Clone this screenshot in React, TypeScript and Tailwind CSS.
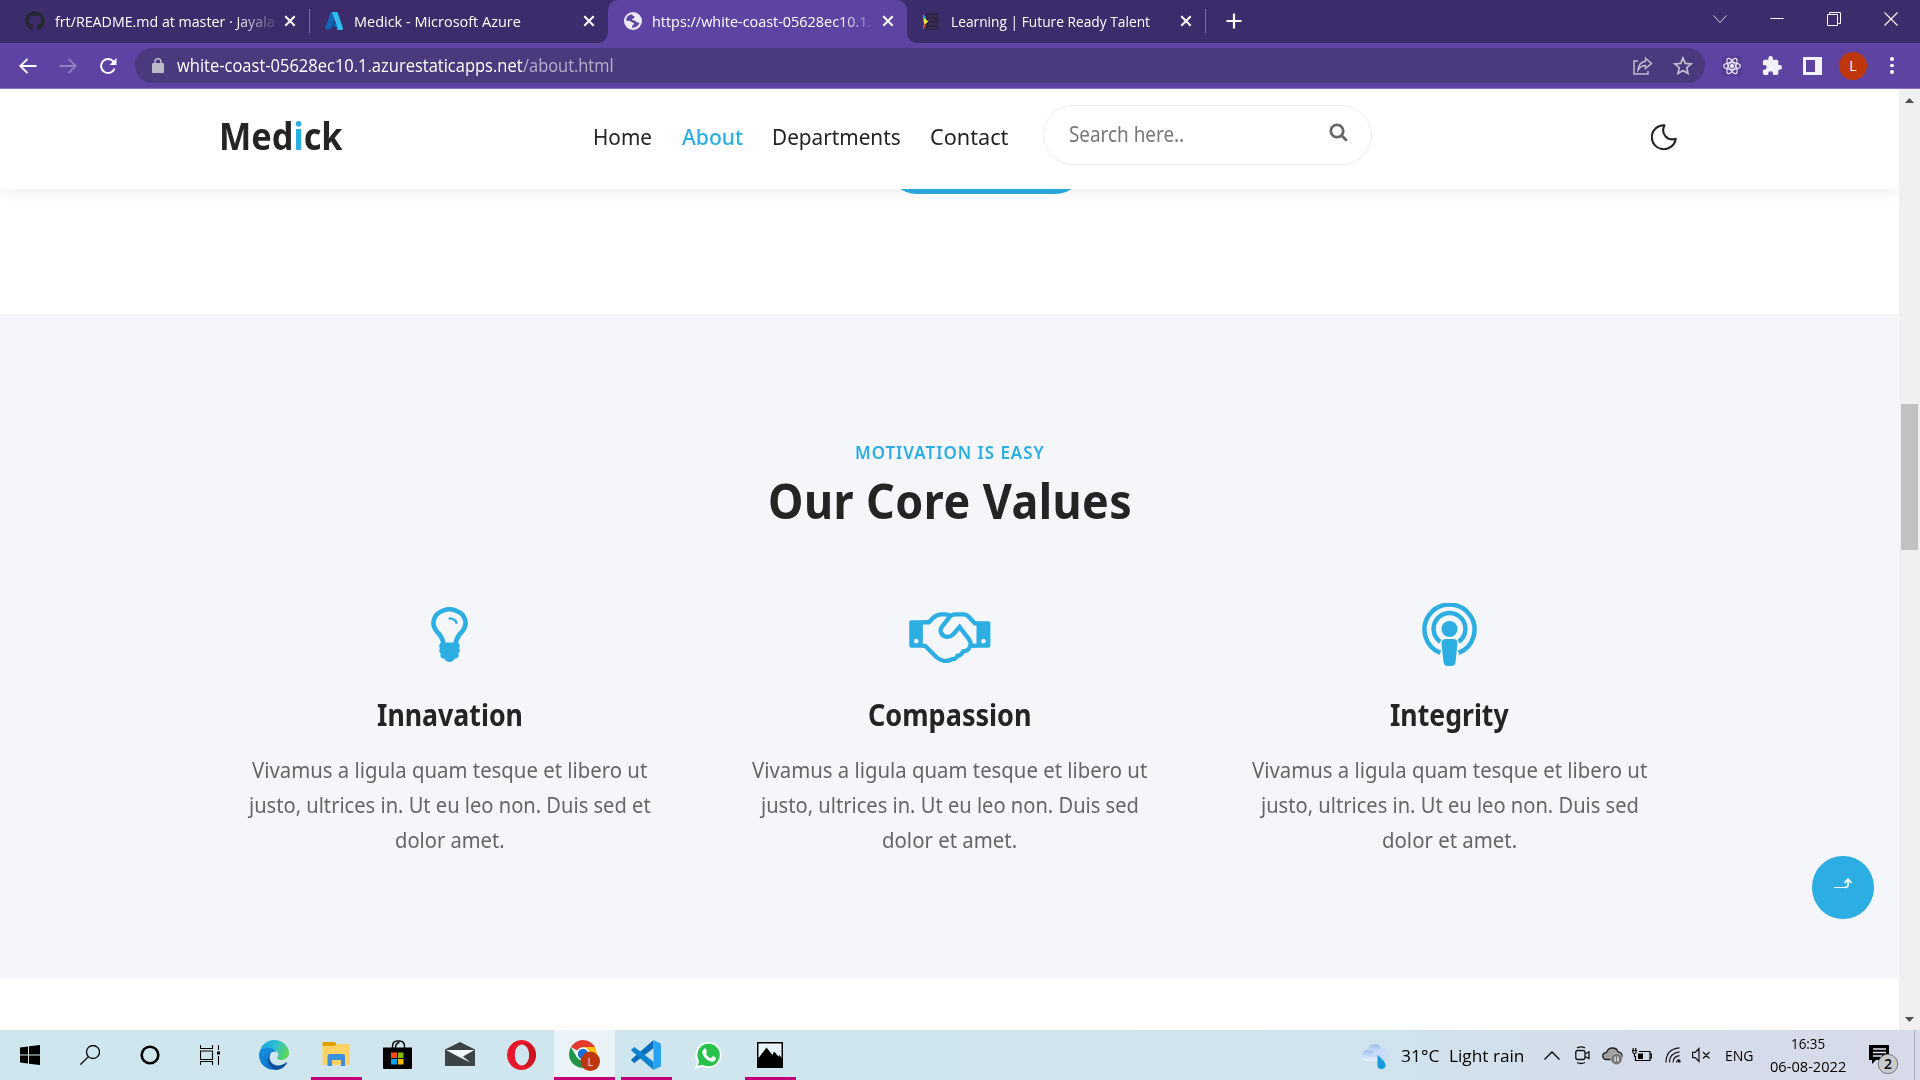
import { useLayoutEffect, useRef, type ReactNode } from "react";
import { FaGithub } from "react-icons/fa";

/* Condenses or widens a single line of text so that it fills its box. */
function Fit({ className, children }: { className: string; children: ReactNode }) {
  const box = useRef<HTMLSpanElement>(null);
  const text = useRef<HTMLSpanElement>(null);
  useLayoutEffect(() => {
    if (box.current && text.current) {
      const ratio = box.current.clientWidth / text.current.offsetWidth;
      text.current.style.transform = `scaleX(${ratio})`;
    }
  }, []);
  return (
    <span ref={box} className={`block shrink-0 ${className}`}>
      <span ref={text} className="inline-block origin-left whitespace-nowrap">
        {children}
      </span>
    </span>
  );
}

function Cross({ className }: { className: string }) {
  return (
    <svg viewBox="0 0 12 12" className={`h-3 w-3 shrink-0 ${className}`} fill="none" stroke="#fff" strokeWidth="2">
      <path d="M1.300 1.300 10.700 10.700M10.700 1.300 1.300 10.700" />
    </svg>
  );
}

function TabStrip() {
  return (
    <div className="flex h-[43px] items-center bg-[#3d2c6b] pb-px text-[15px] leading-[20px] text-white">
      <FaGithub className="ml-[25px] h-5 w-5 shrink-0 text-[#24292f]" />
      <Fit className="mb-px ml-[10px] w-[220px] [mask-image:linear-gradient(to_right,#000_82%,transparent_102%)]">frt/README.md at master · Jayala</Fit>
      <Cross className="ml-[9px]" />
      <div className="ml-[13px] h-6 w-px bg-[#7b6ca6]" />
      <svg viewBox="0 0 18 18" className="ml-[15px] h-[18px] w-[18px] shrink-0">
        <path d="M6 0h6L5.700 17.300H1.200Q-.3 17.300.2 15.800Z" fill="#1266b4" />
        <path d="M5 11h8l1 6.500L5 12Z" fill="#0a5fb0" />
        <path d="M6.300 0h5.200Q12.500 0 12.800 1L18 16.300Q18.200 18 16.700 18H11.500Q13 17.500 12.500 16L7.200 .8Q7 .3 6.300 0Z" fill="#32bdf0" />
      </svg>
      <Fit className="mb-px ml-[11px] w-[167px]">Medick - Microsoft Azure</Fit>
      <Cross className="ml-[62px]" />
      <div className="relative ml-[13px] flex h-[43px] w-[299px] shrink-0 items-center self-start rounded-t-[10px] bg-[#5e43a3] pb-px">
        <div className="absolute -left-2.5 bottom-0 h-2.5 w-2.5 bg-[radial-gradient(circle_at_0_0,#3d2c6b_9.500px,#5e43a3_10px)]" />
        <div className="absolute -right-2.5 bottom-0 h-2.5 w-2.5 bg-[radial-gradient(circle_at_100%_0,#3d2c6b_9.500px,#5e43a3_10px)]" />
        <svg viewBox="0 0 18 18" className="ml-4 h-[18px] w-[18px] shrink-0">
          <circle cx="9" cy="9" r="9" fill="#eceaf4" />
          <path d="M8 2.200Q2.500 3 2.100 8.500L5.600 9Q7.300 9 8.100 10.600 10.300 10.500 10.200 12.300 8 12.500 8 15.800 13.500 15.800 15.500 11L12.500 10Q11.300 8 8.500 8.300 7.300 6.800 9 6.400 11 6 10.500 4.500Q8.500 4 8 2.200Z" fill="#5e43a3" />
        </svg>
        <Fit className="mb-px ml-[10px] w-[219px] [mask-image:linear-gradient(to_right,#000_86%,transparent_103%)]">https://white-coast-05628ec10.1.</Fit>
        <Cross className="ml-[11px]" />
      </div>
      <svg viewBox="0 0 16 19" className="ml-4 h-[19px] w-4 shrink-0">
        <path d="M3 1h12v17H3Z" fill="#2a2339" opacity=".75" />
        <path d="M0 2 3 6v4H0Z" fill="#18a6d8" />
        <path d="M1 6 5.500 9.500 1 13Z" fill="#e8e337" />
        <path d="M0 13h3l-3 5Z" fill="#e8452c" />
        <path d="M5 4h9M5 8h7M5 12h9M5 16h8" stroke="#463766" strokeWidth="1" />
      </svg>
      <Fit className="mb-px ml-3 w-[199px]">Learning | Future Ready Talent</Fit>
      <Cross className="ml-[30px]" />
      <div className="ml-[13px] h-6 w-px bg-[#7b6ca6]" />
      <svg viewBox="0 0 16 16" className="ml-[20px] h-4 w-4 shrink-0" stroke="#fff" strokeWidth="2.200">
        <path d="M8 .5v15M.5 8h15" />
      </svg>
      <div className="ml-auto mr-[22px] flex items-center gap-[43px] pb-[5px]">
        <svg viewBox="0 0 14 14" className="h-3.5 w-3.5" fill="none" stroke="#d6d2e2">
          <path d="M.5 3.500 7 10.500 13.500 3.500" />
        </svg>
        <svg viewBox="0 0 14 14" className="h-3.5 w-3.5" stroke="#fff">
          <path d="M.5 6.500h13" />
        </svg>
        <svg viewBox="0 0 14 14" className="h-3.5 w-3.5" fill="none" stroke="#fff">
          <path d="M.5 2.500h10v11H.5ZM2.500 2.500v-2h11v11h-3" />
        </svg>
        <svg viewBox="0 0 14 14" className="h-3.5 w-3.5" fill="none" stroke="#fff" strokeWidth="1.100">
          <path d="M.5.5 13.500 13.500M13.500.5.5 13.500" />
        </svg>
      </div>
    </div>
  );
}

function Toolbar() {
  return (
    <div className="flex h-[46px] items-center border-b border-[#8773bd] bg-[#5e43a3]">
      <svg viewBox="0 0 18 16" className="ml-[19px] h-4 w-[18px]" fill="none" stroke="#fff" strokeWidth="1.900">
        <path d="M17.500 8H1.500M8.500 .8 1.300 8l7.200 7.200" />
      </svg>
      <svg viewBox="0 0 18 16" className="ml-[22px] h-4 w-[18px]" fill="none" stroke="#937fc4" strokeWidth="1.900">
        <path d="M.5 8h16M9.500 .8 16.700 8l-7.200 7.200" />
      </svg>
      <svg viewBox="0 0 18 18" className="ml-[22px] h-[18px] w-[18px]" fill="none" stroke="#fff" strokeWidth="2">
        <path d="M15.600 11.500A7 7 0 1 1 14.300 4.300L15.500 5.600" />
        <path d="M17.500 1v7h-7Z" fill="#fff" stroke="none" />
      </svg>
      <div className="ml-[18px] flex h-[35px] w-[1570px] items-center rounded-full bg-[#4b397d] text-[17.500px]">
        <svg viewBox="0 0 12 15" className="ml-[17px] h-[15px] w-3" fill="#bdb9c9">
          <path d="M1 5h10q1 0 1 1v8q0 1-1 1H1q-1 0-1-1V6q0-1 1-1Z" />
          <path d="M3 6V3.800a3 3 0 0 1 6 0V6" fill="none" stroke="#bdb9c9" strokeWidth="1.500" />
        </svg>
        <Fit className="ml-[13px] w-[346px] text-white">white-coast-05628ec10.1.azurestaticapps.net</Fit>
        <Fit className="w-[91px] text-[#b7afcb]">/about.html</Fit>
        <svg viewBox="0 0 20 18" className="ml-auto h-[18px] w-5" fill="none" stroke="#c2bccf" strokeWidth="1.500">
          <path d="M5 4H1v13h14v-3" />
          <path d="M12.500 1.200 18.500 6.500 12.500 11.500V8.500Q8 8.500 5 13 5.500 5.500 12.500 4.200Z" />
        </svg>
        <svg viewBox="0 0 20 20" className="ml-5 mr-[12px] h-5 w-5" fill="none" stroke="#c2bccf" strokeWidth="1.700">
          <path d="m10 2 2.300 5.400 5.800.5-4.400 3.800 1.300 5.700-5-3-5 3 1.300-5.700-4.400-3.800 5.800-.5Z" />
        </svg>
      </div>
      <svg viewBox="0 0 20 20" className="ml-[17px] h-5 w-5 bg-[#553b96]" fill="none" stroke="#e9e5f3" strokeWidth="1.200">
        <ellipse cx="10" cy="10" rx="8.500" ry="3.400" />
        <ellipse cx="10" cy="10" rx="8.500" ry="3.400" transform="rotate(60 10 10)" />
        <ellipse cx="10" cy="10" rx="8.500" ry="3.400" transform="rotate(120 10 10)" />
        <circle cx="10" cy="10" r="1.500" fill="#fff" />
      </svg>
      <svg viewBox="1 1 22 22" className="ml-5 h-5 w-5" fill="#f3f1f9">
        <path d="M20.500 11H19V7a2 2 0 0 0-2-2h-4V3.500a2.500 2.500 0 0 0-5 0V5H4a2 2 0 0 0-2 2v3.800h1.500a2.700 2.700 0 0 1 0 5.400H2V20a2 2 0 0 0 2 2h3.800v-1.500a2.700 2.700 0 0 1 5.400 0V22H17a2 2 0 0 0 2-2v-4h1.500a2.500 2.500 0 0 0 0-5Z" />
      </svg>
      <svg viewBox="0 0 19 18" className="ml-[21px] h-[18px] w-[19px]">
        <path d="M0 0h19v18H0ZM3 3v12h9V3Z" fill="#f3f1f9" fillRule="evenodd" />
      </svg>
      <div className="ml-[17px] flex h-7 w-7 items-center justify-center rounded-full bg-[#bf360c] text-[14px] text-white">L</div>
      <div className="ml-[23px] flex w-1 flex-col gap-[3px]">
        <i className="size-[3.500px] rounded-full bg-white" />
        <i className="size-[3.500px] rounded-full bg-white" />
        <i className="size-[3.500px] rounded-full bg-white" />
      </div>
    </div>
  );
}

function SiteHeader() {
  return (
    <header className="relative z-10 flex h-[100px] shrink-0 items-start bg-white text-[#242424] shadow-[0_2px_14px_rgba(0,0,0,0.08)]">
      <Fit className="ml-[219px] mt-[22px] w-[124px] text-[37px] font-bold leading-[50px]">
        Med<span className="text-[#2caee2]">i</span>ck
      </Fit>
      <nav className="ml-[250px] mt-[33px] flex text-[22.500px] leading-[30px]">
        <Fit className="w-[59px]">Home</Fit>
        <Fit className="ml-[30px] w-[61px] font-medium text-[#2caee2]">About</Fit>
        <Fit className="ml-[29px] w-[129px]">Departments</Fit>
        <Fit className="ml-[29px] w-[78px]">Contact</Fit>
      </nav>
      <div className="ml-[35px] mt-4 flex h-[60px] w-[329px] rounded-full border border-[#ebebeb]">
        <Fit className="ml-[25px] mt-[12px] w-[115px] text-[22px] leading-[30px] text-[#777]">Search here..</Fit>
        <svg viewBox="0 0 19 19" className="ml-auto mr-[23px] mt-[17px] h-[19px] w-[19px]" fill="none" stroke="#666" strokeWidth="2.800">
          <circle cx="8" cy="8" r="6.200" />
          <path d="m12.300 12.300 5.500 5.500" />
        </svg>
      </div>
      <svg viewBox="0 0 26 26" className="ml-[279px] mt-[35px] h-[26px] w-[26px]" fill="none" stroke="#242424" strokeWidth="2.100" strokeLinejoin="round">
        <path d="M13.500 1.200C9.500 9 15.500 17.500 24.700 14.800A12 12 0 1 1 13.500 1.200Z" />
      </svg>
    </header>
  );
}

function Bulb() {
  return (
    <svg viewBox="384 128 1024 1536" className="mt-[4px] h-[55px] w-[37px]" fill="#2caee2">
      <path d="M1120 576q0 13-9.500 22.500t-22.500 9.500-22.500-9.500-9.500-22.500q0-46-54-71t-106-25q-13 0-22.500-9.500t-9.500-22.500 9.500-22.500 22.500-9.500q50 0 99.500 16t87 54 37.500 90zm160 0q0-72-34.500-134t-90-101.500-123-62-136.500-22.500-136.500 22.500-123 62-90 101.500-34.500 134q0 101 68 180 10 11 30.500 33t30.500 33q128 153 141 298h228q13-145 141-298 10-11 30.500-33t30.500-33q68-79 68-180zm128 0q0 155-103 268-45 49-74.500 87t-59.500 95.500-34 107.500q47 28 47 82 0 37-25 64 25 27 25 64 0 52-45 81 13 23 13 47 0 46-31.500 71t-77.500 25q-20 44-60 70t-87 26-87-26-60-70q-46 0-77.500-25t-31.500-71q0-24 13-47-45-29-45-81 0-37 25-64-25-27-25-64 0-54 47-82-4-50-34-107.500t-59.500-95.500-74.500-87q-103-113-103-268 0-99 44.500-184.500t117-142 164-89 186.500-32.500 186.500 32.500 164 89 117 142 44.500 184.500z" />
    </svg>
  );
}

function Handshake() {
  return (
    <svg viewBox="567 575 246 154" className="mt-[9px] h-[51px] w-[82px]" fill="none" stroke="#2caee2" strokeWidth="13">
      <path d="M573 600h35v83h-35q-6 0-6-6v-71q0-6 6-6ZM770 603h36q6 0 6 6v68q0 6-6 6h-36ZM588 656a7 7 0 1 0 .1 0ZM791 656a7 7 0 1 0 .1 0Z" fill="#2caee2" fillRule="evenodd" stroke="none" />
      <path d="M606 606h20L640 592Q651 582 664 582h12Q684 582 690 587" />
      <path d="M606 677h9L648 710Q662 723 678 723 690 722 697 717 706 719 713 707 722 708 730 694 744 694 750 680 756 669 747 657L719 620 700 642Q691 651 681 650 667 649 663 637 659 629 666 619L687 592Q694 582 706 582h25Q741 582 748 591L765 609h7" />
      <path d="M752 677h20" />
    </svg>
  );
}

function Podcast() {
  return (
    <svg viewBox="0 0 55 63" className="h-[63px] w-[55px]" fill="none" stroke="#2caee2" strokeWidth="4.500">
      <path d="M18.300 49.800A25 25 0 1 1 36.700 49.800M18.300 38.800A15.900 15.900 0 1 1 36.700 38.800" />
      <g fill="#2caee2" stroke="none">
        <circle cx="27.500" cy="26" r="8" />
        <path d="M24 36h7q4.800 0 4.500 4.500L33.500 59Q33 63 29.500 63h-4Q22 63 21.500 59L19.500 40.500Q19.200 36 24 36Z" />
      </g>
    </svg>
  );
}

type Line = { text: string; width: string };

function Value({ icon, title, titleWidth, lines }: { icon: ReactNode; title: string; titleWidth: string; lines: Line[] }) {
  return (
    <article className="flex w-[500px] flex-col items-center">
      <div className="flex h-[63px] items-start">{icon}</div>
      <h3 className="mt-[31px] text-[30px] font-bold leading-9 text-[#242424]">
        <Fit className={titleWidth}>{title}</Fit>
      </h3>
      <div className="mt-[19px] flex flex-col items-center text-[22.500px] leading-[35px] text-[#666]">
        {lines.map((l) => (
          <Fit key={l.text} className={l.width}>{l.text}</Fit>
        ))}
      </div>
    </article>
  );
}

function CoreValues() {
  return (
    <section className="mt-[125px] flex h-[664px] shrink-0 flex-col items-center bg-[#f4f6fa] pt-[127px]">
      <Fit className="w-[190px] text-[17px] font-semibold leading-6 tracking-[1px] text-[#2caee2]">MOTIVATION IS EASY</Fit>
      <h2 className="mt-[8px] text-[48px] font-bold leading-[56px] tracking-[0.5px] text-[#242424]">
        <Fit className="w-[364px]">Our Core Values</Fit>
      </h2>
      <div className="mt-[74px] flex">
        <Value
          icon={<Bulb />}
          title="Innavation"
          titleWidth="w-[146px]"
          lines={[
            { text: "Vivamus a ligula quam tesque et libero ut", width: "w-[395px]" },
            { text: "justo, ultrices in. Ut eu leo non. Duis sed et", width: "w-[402px]" },
            { text: "dolor amet.", width: "w-[110px]" },
          ]}
        />
        <Value
          icon={<Handshake />}
          title="Compassion"
          titleWidth="w-[164px]"
          lines={[
            { text: "Vivamus a ligula quam tesque et libero ut", width: "w-[395px]" },
            { text: "justo, ultrices in. Ut eu leo non. Duis sed", width: "w-[378px]" },
            { text: "dolor et amet.", width: "w-[135px]" },
          ]}
        />
        <Value
          icon={<Podcast />}
          title="Integrity"
          titleWidth="w-[119px]"
          lines={[
            { text: "Vivamus a ligula quam tesque et libero ut", width: "w-[395px]" },
            { text: "justo, ultrices in. Ut eu leo non. Duis sed", width: "w-[378px]" },
            { text: "dolor et amet.", width: "w-[135px]" },
          ]}
        />
      </div>
    </section>
  );
}

function Scrollbar() {
  return (
    <div className="flex w-[21px] shrink-0 flex-col items-center bg-[#f0f0f0]">
      <svg viewBox="0 0 9 5" className="mt-[9px] h-[5px] w-[9px]" fill="#505050">
        <path d="M0 5 4.500 0 9 5Z" />
      </svg>
      <div className="mt-[301px] h-[146px] w-[17px] bg-[#c1c1c1]" />
      <svg viewBox="0 0 9 5" className="mb-2 mt-auto h-[5px] w-[9px]" fill="#505050">
        <path d="M0 0 4.500 5 9 0Z" />
      </svg>
    </div>
  );
}

function TaskItem({ className, children, running }: { className: string; children: ReactNode; running?: boolean }) {
  return (
    <div className={`flex h-[50px] shrink-0 items-center justify-center ${running ? "border-b-[3px] border-[#bf0077] pt-[3px]" : ""} ${className}`}>
      {children}
    </div>
  );
}

function Taskbar() {
  return (
    <footer className="flex h-[50px] items-center bg-[linear-gradient(90deg,#d0e6ee_0%,#d0e6ee_45%,#cfe4ee_70%,#d4dcea_85%,#d6dae9_100%)] text-[15px] text-black">
      <TaskItem className="ml-5 w-5">
        <svg viewBox="0 0 20 20" className="h-5 w-5">
          <path d="M0 2.500 8 1.400V9.400H0ZM9 1.300 20 0v9.400H9ZM0 10.400h8v8.200L0 17.500ZM9 10.400h11V20L9 18.700Z" />
        </svg>
      </TaskItem>
      <TaskItem className="ml-10 w-5">
        <svg viewBox="0 0 20 20" className="h-5 w-5" fill="none" stroke="#000" strokeWidth="1.300">
          <circle cx="13" cy="7" r="6.500" />
          <path d="M8.400 11.600.4 19.600" />
        </svg>
      </TaskItem>
      <TaskItem className="ml-10 w-5">
        <svg viewBox="0 0 20 20" className="h-5 w-5" fill="none" stroke="#000" strokeWidth="2.600">
          <circle cx="10" cy="10" r="8.300" />
        </svg>
      </TaskItem>
      <TaskItem className="ml-10 w-5">
        <svg viewBox="0 0 20 20" className="h-5 w-5" fill="none" stroke="#000" strokeWidth="1.100">
          <path d="M.5 0v3.500h12V0M.5 6h12v8.500H.5ZM.5 20v-3.500h12V20M18.500 0v5M18.500 11v9" />
          <path d="M17 6.500h3v3h-3Z" fill="#000" stroke="none" />
        </svg>
      </TaskItem>
      <TaskItem className="ml-[39px] w-[30px]">
        <svg viewBox="0 0 30 30" className="h-[30px] w-[30px]">
          <defs>
            <linearGradient id="edgeTop" x1="0" y1=".3" x2="1" y2=".6">
              <stop offset="0" stopColor="#1a9fe0" />
              <stop offset=".5" stopColor="#2cc0d0" />
              <stop offset="1" stopColor="#62d850" />
            </linearGradient>
            <linearGradient id="edgeSide" x1="0" y1="0" x2=".6" y2="1">
              <stop offset="0" stopColor="#1993e0" />
              <stop offset="1" stopColor="#0a72c9" />
            </linearGradient>
          </defs>
          <path d="M.5 13C1.500 5.500 8 0 15 0 23.500 0 30 6 30 13c0 4-3 7-7.500 7-3.500 0-5-1.300-4-2.800 2.200-3.200-.5-7.200-4.500-7.700C8 8.500 3 10 .5 13Z" fill="url(#edgeTop)" />
          <path d="M0 15C0 9 5 7 9.500 7.500c3.500.3 7 2 7.500 5-4-2.500-8 2-7 7s4.500 9 9 9.800C9 31.500 0 25 0 15Z" fill="url(#edgeSide)" />
          <path d="M12.500 12.500C10 15 10 19 12 22c3 4.500 10 4.500 15 .5.800-.5 1.300 0 .8.800C25 28 21 30 17.500 30 11 28.500 8 23 9 18c.5-3 2-5 3.500-5.500Z" fill="#0c4f9e" />
        </svg>
      </TaskItem>
      <TaskItem className="ml-[22px] w-[51px]" running>
        <svg viewBox="0 0 28 24" className="mb-[2px] mr-[2px] h-6 w-7">
          <path d="M.5 2h26q1 0 1 1v20H.5Z" fill="#ffd262" />
          <path d="M.5 4V1q0-1 1-1h11q1.500 0 1.500 2t-1.500 2Z" fill="#e0a100" />
          <path d="M5.500 24V14q0-2 2-2h13.500q2 0 2 2v10H19v-6h-9v6Z" fill="#3a90dc" />
        </svg>
      </TaskItem>
      <TaskItem className="ml-[21px] w-[29px]">
        <svg viewBox="0 0 29 30" className="h-[30px] w-[29px]">
          <path d="M9.500 8V6.500q0-5.500 5-5.500h2q5 0 5 5.500V8M12.500 8q0-5 4-5.500" fill="none" stroke="#111" strokeWidth="1.500" />
          <path d="M0 7.500h29V28q0 1-1 1H1q-1 0-1-1Z" />
          <path d="M8 12.500h6v5.500H8Z" fill="#f25022" />
          <path d="M15 12.500h5.500v5.500H15Z" fill="#7fba00" />
          <path d="M8 19h6v5.500H8Z" fill="#00a4ef" />
          <path d="M15 19h5.500v5.500H15Z" fill="#ffb900" />
        </svg>
      </TaskItem>
      <TaskItem className="ml-[33px] w-[30px]">
        <svg viewBox="0 0 30 24" className="mb-[2px] h-6 w-[30px]" fill="#3b4347">
          <path d="M0 7.500 15 0 30 7.500V24H0Z" />
          <path d="M1 8h28.500L18 14.500 25.500 20.500 13 14.500Z" fill="#f2fafc" />
        </svg>
      </TaskItem>
      <TaskItem className="ml-8 w-[29px]">
        <svg viewBox="0 0 29 30" className="h-[30px] w-[29px]">
          <path d="M14.500 0a14.500 15 0 1 0 .1 0ZM15 4.500c4 0 7.200 4.500 7.200 10.500S19 25.500 15 25.500 7.800 21 7.800 15 11 4.500 15 4.500Z" fill="#e8182b" fillRule="evenodd" />
          <path d="M15 4.500C20 1 29 6 29 15s-9 14-14 10.500c4 0 7.200-4.500 7.200-10.500S19 4.500 15 4.500Z" fill="#b5121c" opacity=".55" />
        </svg>
      </TaskItem>
      <TaskItem className="ml-[18px] w-[61px] bg-[#eaf4f8]" running>
        <svg viewBox="0 0 31 31" className="mt-px h-[31px] w-[31px]">
          <path d="M14 14 1.900 7A14 14 0 0 1 26.100 7Z" fill="#e33b2e" />
          <path d="M14 7H26.100A14 14 0 0 1 14 28Z" fill="#fbc116" />
          <path d="M1.900 7A14 14 0 0 0 14 28L20 17.500H8Z" fill="#229447" />
          <circle cx="14" cy="14" r="6.700" fill="#fff" />
          <circle cx="14" cy="14" r="5.200" fill="#1a6fe0" />
          <circle cx="21.300" cy="21.300" r="9.700" fill="#bf360c" />
          <text x="21.300" y="25.500" fill="#f1ddd4" fontSize="11" textAnchor="middle">L</text>
        </svg>
      </TaskItem>
      <TaskItem className="ml-[6px] w-[51px]" running>
        <svg viewBox="0 0 30 30" className="mr-px h-[30px] w-[30px]">
          <path d="M22.500 0 22.500 8.200 4 22.600Q3.300 23.200 2.600 22.600L.5 20.600Q-.2 20 .5 19.200Z" fill="#0a6fba" />
          <path d="M22.500 30V21.800L4 7.400Q3.300 6.800 2.600 7.400L.5 9.400Q-.2 10 .5 10.800Z" fill="#0c83cf" />
          <path d="M22 0 28.800 3Q30 3.500 30 5V25Q30 26.500 28.800 27L22 30Q22.500 29 22.500 27V3Q22.500 1 22 0Z" fill="#27a2ee" />
        </svg>
      </TaskItem>
      <TaskItem className="ml-[23px] w-[27px]">
        <svg viewBox="0 0 27 27" className="h-[27px] w-[27px]">
          <path d="M13.500 0A13 13 0 1 1 7.500 24.500L0 27 2 19.500A13 13 0 0 1 13.500 0Z" fill="#fafffb" />
          <circle cx="13.600" cy="13" r="11.200" fill="#26c24b" />
          <path d="M3 23.800 4.500 17 9.500 22.200Z" fill="#26c24b" />
          <path d="M9.200 6.800q1-1 1.700.2l1.200 2.700q0 .8-1.200 2 1.900 3.500 5 4.500l1.500-1.800q.5-.3 3.300 1.200.7 3-2.500 4-2 .7-5.800-1.600-4.200-3-5.200-7Q7 8.500 9.200 6.800Z" fill="#fff" />
        </svg>
      </TaskItem>
      <TaskItem className="ml-[23px] w-[51px]" running>
        <svg viewBox="0 0 26 26" className="mr-px h-[26px] w-[26px]">
          <path d="M0 0h26v26H0Z" />
          <path d="M1.500 1.500h23V16l-2-3-1 1.500L17 9.500 15.500 13 9.500 5.500 1.500 16Z" fill="#e9f5fa" />
        </svg>
      </TaskItem>

      <div className="ml-auto flex items-center">
        <svg viewBox="0 0 28 26" className="mt-px h-[26px] w-7">
          <defs>
            <linearGradient id="cloud" x1="0" y1="0" x2="0" y2="1">
              <stop offset="0" stopColor="#9fbfee" />
              <stop offset="1" stopColor="#eaf3ff" />
            </linearGradient>
          </defs>
          <circle cx="13" cy="8" r="7" fill="url(#cloud)" />
          <circle cx="20.500" cy="11.500" r="6.300" fill="#c9dcf8" />
          <path d="M6 7q6 0 7 5h8v6H6Q0 18 0 12.500T6 7Z" fill="url(#cloud)" />
          <path d="M15.500 12Q24 19 23.500 22a4 4 0 0 1-8 0Z" fill="#159be4" />
        </svg>
        <Fit className="ml-[11px] mt-[2px] w-[38px] text-[17px]">31°C</Fit>
        <Fit className="ml-[10px] mt-[2px] w-[75px] text-[17px]">Light rain</Fit>
        <svg viewBox="0 0 16 9" className="ml-5 h-[9px] w-4" fill="none" stroke="#000" strokeWidth="1.300">
          <path d="M.5 8.500 8 1l7.500 7.500" />
        </svg>
        <svg viewBox="0 0 15 19" className="ml-[15px] h-[19px] w-[15px]" fill="none" stroke="#111" strokeWidth="1.300">
          <path d="M2.500 4.500h5.500q2 0 2 2v5q0 2-2 2H2.500Q.8 13.500.8 11.500v-5q0-2 1.700-2ZM10 8l4-2.200v6.700L10 10.500M2 1.800Q6 0 10 1.800M2 16.500Q6 18.500 10 16.500" />
        </svg>
        <svg viewBox="0 0 21 18" className="ml-3 mt-[2px] h-[18px] w-[21px]">
          <path d="M4 12.500Q.7 12 .7 9T4.500 5.500Q6 1 10.500 1t5.500 4q4 .5 4 4 0 3-3 3.500Z" fill="#a2a2a2" stroke="#222" strokeWidth="1.300" />
          <circle cx="14.500" cy="12" r="5.700" fill="#757575" stroke="#d4dcea" strokeWidth=".6" />
          <path d="M13 9.500v5M16 9.500v5" stroke="#fff" strokeWidth="1.200" />
        </svg>
        <svg viewBox="0 0 20 15" className="ml-[9px] h-[15px] w-5" fill="none" stroke="#000" strokeWidth="1.200">
          <path d="M7 3.500h11v9H3.500V8M18 6h1.500v4H18M0 2.500h5M1.200 0v2.500M3.800 0v2.500M.8 2.500V4q0 1.500 1.700 1.500T4.200 4V2.500M2.500 5.500V9" />
          <path d="M6 5.500h5v5.500H6Z" fill="#000" stroke="none" />
        </svg>
        <svg viewBox="0 0 16 16" className="ml-[13px] h-4 w-4" fill="none" stroke="#111" strokeWidth="1.200">
          <path d="M1 15.500Q1 2 14.500.8M4.500 15.500Q4.500 6 14.500 4.800M8 15.500Q8 9.500 14.500 8.700M11.500 15.500Q11.500 13 14.500 12.500" />
          <path d="M13 13h2.500v2.500H13Z" fill="#111" stroke="none" />
        </svg>
        <svg viewBox="0 0 19 16" className="ml-[11px] h-4 w-[19px]" fill="none" stroke="#111" strokeWidth="1.200">
          <path d="M.6 5.300h2.600L7 1.500v13L3.200 10.700H.6ZM11 5l6.500 6.500M17.500 5 11 11.500" />
        </svg>
        <Fit className="ml-[14px] mt-px w-[29px]">ENG</Fit>
        <div className="ml-[16px] flex w-[76px] flex-col items-center pb-px leading-[23px]">
          <Fit className="w-[34px]">16:35</Fit>
          <Fit className="w-[76px]">06-08-2022</Fit>
        </div>
        <svg viewBox="0 0 31 31" className="ml-[22px] mt-[6px] h-[31px] w-[31px]">
          <path d="M1 2h20v15H8l-4 4V17H1Z" />
          <path d="M5 6h13M5 9.500h13M5 13h9" stroke="#dfe5f0" strokeWidth="1.300" />
          <circle cx="20" cy="21" r="9.700" fill="#c9cacf" stroke="#777" />
          <text x="20" y="26" fontSize="14" textAnchor="middle" fontWeight="600">2</text>
        </svg>
        <div className="ml-[15px] mr-[5px] h-[50px] w-px bg-[#a9aebc]" />
      </div>
    </footer>
  );
}

export default function App() {
  return (
    <div className="flex h-[1080px] w-[1920px] flex-col overflow-hidden bg-white font-['Open_Sans',sans-serif]">
      <TabStrip />
      <Toolbar />
      <div className="flex h-[941px] shrink-0">
        <main className="relative flex w-[1899px] flex-col overflow-hidden bg-white font-['Noto_Sans',sans-serif]">
          <div className="absolute left-[887px] top-[45px] h-[60px] w-[198px] rounded-full bg-[#2caee2]" />
          <SiteHeader />
          <CoreValues />
          <div className="absolute left-[1812px] top-[767px] h-[63px] w-[62px] rounded-full bg-[#2caee2]">
            <svg viewBox="0 0 19 11" className="ml-[22px] mt-[22px] h-[11px] w-[19px]" fill="none" stroke="#fff">
              <path d="M0 9.500h11" strokeWidth="1" />
              <path d="M11 9.300Q14 9.300 14 7V2" strokeWidth="1.700" />
              <path d="M10.500 5 14 1.200 17.500 5" strokeWidth="1.800" />
            </svg>
          </div>
        </main>
        <Scrollbar />
      </div>
      <Taskbar />
    </div>
  );
}
